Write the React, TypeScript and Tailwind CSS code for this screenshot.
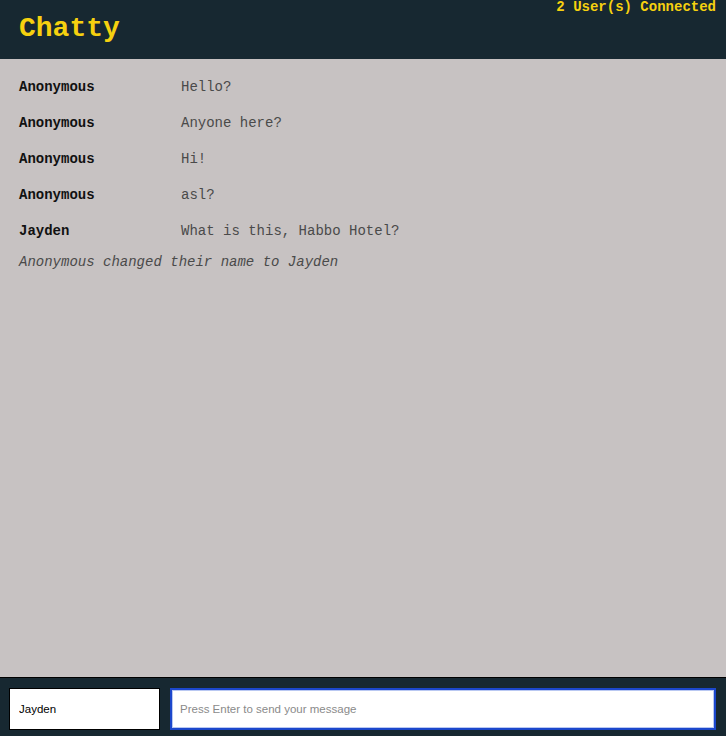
const messages = [
  { user: "Anonymous", text: "Hello?" },
  { user: "Anonymous", text: "Anyone here?" },
  { user: "Anonymous", text: "Hi!" },
  { user: "Anonymous", text: "asl?" },
  { user: "Jayden", text: "What is this, Habbo Hotel?" },
];

const mono = { fontFamily: '"Liberation Mono", "Courier New", monospace' };

export default function App() {
  return (
    <div className="h-screen flex flex-col bg-[#c7c2c2]" style={mono}>
      {/* Header */}
      <header className="h-[59px] shrink-0 bg-[#172831] flex justify-between items-start pl-[19px] pr-[10px]">
        <h1 className="text-[28px] leading-[28px] font-bold text-[#f6d10f] mt-[15px]">
          Chatty
        </h1>
        <span className="text-[14px] leading-[14px] font-bold text-[#f6d10f] mt-0">
          2 User(s) Connected
        </span>
      </header>

      {/* Messages */}
      <main className="flex-1 pt-[10px] px-[19px] text-[14px]">
        {messages.map((m, i) => (
          <div key={i} className="flex items-center h-9">
            <span className="w-[162px] shrink-0 font-bold text-[#111]">{m.user}</span>
            <span className="text-[#4a4a4a]">{m.text}</span>
          </div>
        ))}
        <div className="h-[26px] flex items-center italic text-[#4a4a4a]">
          Anonymous changed their name to Jayden
        </div>
      </main>

      {/* Footer */}
      <footer
        className="h-[59px] shrink-0 bg-[#172831] border-t border-black flex gap-[10px] pl-[9px] pr-[10px] pt-[10px]"
        style={{ fontFamily: '"Liberation Sans", Arial, sans-serif' }}
      >
        <input
          defaultValue="Jayden"
          className="w-[151px] h-[42px] bg-white border border-black px-[9px] text-[11.5px] text-black outline-none"
        />
        <input
          placeholder="Press Enter to send your message"
          className="flex-1 h-[42px] bg-white border-2 border-[#1c47cc] shadow-[inset_0_0_0_1px_#b9c8f2] px-[8px] text-[11.5px] text-black placeholder:text-[#8a8a8a] outline-none"
        />
      </footer>
    </div>
  );
}
